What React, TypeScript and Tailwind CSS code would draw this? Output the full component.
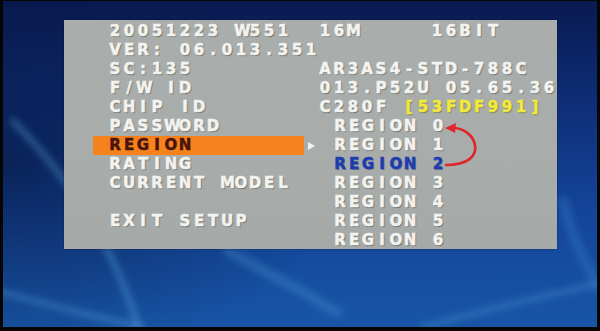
import React from "react";

const Txt = ({ s, className = "" }: { s: string; className?: string }) => (
  <span className={"inline-flex " + className}>
    {Array.from(s).map((c, i) => (
      <span key={i} className="inline-block w-[14px] text-center">
        {c === " " ? "\u00a0" : c}
      </span>
    ))}
  </span>
);

const Row = ({
  left,
  right,
  highlight = false,
  arrow = false,
}: {
  left?: React.ReactNode;
  right?: React.ReactNode;
  highlight?: boolean;
  arrow?: boolean;
}) => (
  <div className="flex h-[19px] leading-[19px]">
    <div
      className={
        "w-[211px] shrink-0 pl-[15px] whitespace-nowrap " +
        (highlight ? "bg-[#f5821c] text-[#4a130c] [text-shadow:none]" : "")
      }
    >
      {left}
    </div>
    <div className="w-[14px] shrink-0 flex items-center justify-center">
      {arrow && (
        <svg width="10" height="10" viewBox="0 0 10 10">
          <polygon points="2,1 2,9 9,5" fill="#f2f2ee" />
        </svg>
      )}
    </div>
    <div className="flex-1 whitespace-nowrap">{right}</div>
  </div>
);

const Region = ({ n, blue = false }: { n: number; blue?: boolean }) => (
  <span className="pl-[15px] inline-block">
    <Txt s={`REGION ${n}`} className={blue ? "text-[#1d3cb0] [text-shadow:1px_1px_0_rgba(20,30,80,0.35)]" : ""} />
  </span>
);

export default function App() {
  return (
    <div className="relative w-[600px] h-[331px] bg-[#060504] overflow-hidden">
      <div className="relative mx-[3px] mt-[1px] h-[326px] overflow-hidden bg-[linear-gradient(180deg,#091a50_0%,#0e2d76_30%,#14459a_65%,#1855a6_100%)]">
        <svg className="absolute inset-0" width="594" height="326" viewBox="0 0 594 326">
          <defs>
            <filter id="b" x="-20%" y="-20%" width="140%" height="140%">
              <feGaussianBlur stdDeviation="3.5" />
            </filter>
            <radialGradient id="dk" cx="0" cy="0.5" r="0.6">
              <stop offset="0" stopColor="#041030" stopOpacity="0.55" />
              <stop offset="1" stopColor="#041030" stopOpacity="0" />
            </radialGradient>
          </defs>
          <rect x="0" y="0" width="594" height="326" fill="url(#dk)" />
          <g filter="url(#b)" fill="none" strokeLinecap="round">
            <path d="M10,120 C60,170 110,240 135,326" stroke="#5fb0e6" strokeOpacity="0.4" strokeWidth="6" />
            <path d="M-5,290 C50,305 100,318 140,326" stroke="#6ab8ea" strokeOpacity="0.35" strokeWidth="5" />
            <path d="M225,250 C260,270 300,290 335,312" stroke="#4f9fd8" strokeOpacity="0.3" strokeWidth="10" />
            <path d="M420,326 C480,310 540,295 600,282" stroke="#5aaae0" strokeOpacity="0.35" strokeWidth="5" />
            <path d="M560,200 C570,240 585,270 600,290" stroke="#3f8ed0" strokeOpacity="0.3" strokeWidth="10" />
          </g>
        </svg>

        <div
          className="relative z-10 mt-[19px] ml-[61px] w-[493px] h-[229px] pt-[2px] pl-[29px] bg-[linear-gradient(180deg,#a9aeac_0%,#a8adab_60%,#a5aaa9_100%)] text-[#f3f3ef] text-[15px] font-bold [font-family:'DejaVu_Sans',sans-serif] [-webkit-text-stroke:0.5px_currentColor] [text-shadow:1px_1px_1px_rgba(60,60,60,0.55)] shadow-[0_0_2px_rgba(0,0,0,0.4)]"
        >
          <Row
            left={<Txt s="20051223 W551" />}
            right={
              <span className="inline-flex">
                <span className="inline-block w-[112px]">
                  <Txt s="16M" />
                </span>
                <Txt s="16BIT" />
              </span>
            }
          />
          <Row left={<Txt s="VER: 06.013.351" />} />
          <Row left={<Txt s="SC:135" />} right={<Txt s="AR3AS4-STD-788C" />} />
          <Row left={<Txt s="F/W ID" />} right={<Txt s="013.P52U 05.65.36" />} />
          <Row
            left={<Txt s="CHIP ID" />}
            right={
              <span className="inline-flex">
                <Txt s="C280F " />
                <Txt s="[53FDF991]" className="text-[#f1ea3c] [text-shadow:1px_1px_1px_rgba(90,80,20,0.6)]" />
              </span>
            }
          />
          <Row left={<Txt s="PASSWORD" />} right={<Region n={0} />} />
          <Row left={<Txt s="REGION" />} highlight arrow right={<Region n={1} />} />
          <Row left={<Txt s="RATING" />} right={<Region n={2} blue />} />
          <Row left={<Txt s="CURRENT MODEL" />} right={<Region n={3} />} />
          <Row right={<Region n={4} />} />
          <Row left={<Txt s="EXIT SETUP" />} right={<Region n={5} />} />
          <Row right={<Region n={6} />} />
        </div>
      </div>

      <svg className="absolute inset-0 z-20 pointer-events-none" width="600" height="331" viewBox="0 0 600 331">
        <path
          d="M446,165 C468,165 477,156 475,145 C473,135 464,129 455,128"
          fill="none"
          stroke="#e0262a"
          strokeWidth="2.6"
          strokeLinecap="round"
        />
        <polygon points="445,128 456,123 455,133" fill="#e0262a" />
      </svg>
    </div>
  );
}
